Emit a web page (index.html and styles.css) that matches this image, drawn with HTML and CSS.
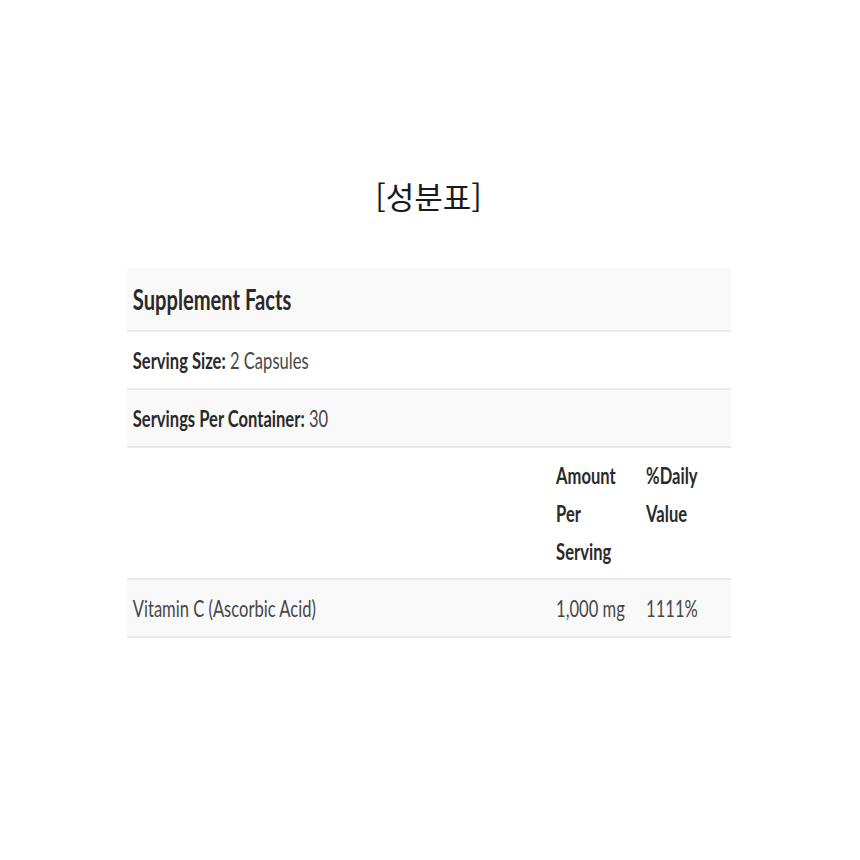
FILE: index.html
```html
<!DOCTYPE html>
<html lang="ko">
<head>
<meta charset="utf-8">
<title>성분표</title>
<link rel="stylesheet" href="styles.css">
</head>
<body>
<main class="page">
  <h1 class="title">[성분표]</h1>
  <div class="facts-wrap">
    <div class="facts">
      <div class="row head shade"><span class="strong">Supplement Facts</span></div>
      <div class="row"><span class="strong">Serving Size:</span> 2 Capsules</div>
      <div class="row shade"><span class="strong">Servings Per Container:</span> 30</div>
      <div class="row grid tall">
        <div class="cell"></div>
        <div class="cell strong">Amount Per Serving</div>
        <div class="cell strong">%Daily Value</div>
      </div>
      <div class="row grid shade">
        <div class="cell">Vitamin C (Ascorbic Acid)</div>
        <div class="cell">1,000 mg</div>
        <div class="cell">1111%</div>
      </div>
    </div>
  </div>
</main>
</body>
</html>
```

FILE: styles.css
```css
html, body {
  margin: 0;
  padding: 0;
  background: #ffffff;
}

.page {
  width: 860px;
  height: 860px;
  padding-top: 174px;
  box-sizing: border-box;
}

.title {
  margin: 0;
  text-align: center;
  font-family: "Noto Sans CJK KR", "Noto Sans", sans-serif;
  font-weight: 400;
  font-size: 31px;
  line-height: 44px;
  color: #1a1a1a;
  padding-right: 3px;
}

.facts-wrap {
  margin-top: 50px;
  margin-left: 127px;
  width: 604px;
}

.facts {
  width: 839px;
  transform: scaleX(0.72);
  transform-origin: left top;
  font-family: Lato, "Open Sans", sans-serif;
  font-size: 23px;
  color: #474747;
}

.row {
  padding: 9px 8px;
  line-height: 38px;
  border-bottom: 2px solid #e8e8e8;
  white-space: nowrap;
}

.row.head {
  padding-top: 12px;
  padding-bottom: 12px;
  font-size: 28px;
}

.shade {
  background: #f9f9f9;
}

.strong {
  font-weight: 700;
  color: #2a2a2a;
}

.grid {
  display: grid;
  grid-template-columns: 588px 125px 1fr;
  padding: 0;
  white-space: normal;
}

.tall {
  padding-top: 8px;
  padding-bottom: 8px;
}

.grid .cell {
  padding: 9px 8px;
}

.tall .cell {
  padding-top: 0;
  padding-bottom: 0;
}
```
